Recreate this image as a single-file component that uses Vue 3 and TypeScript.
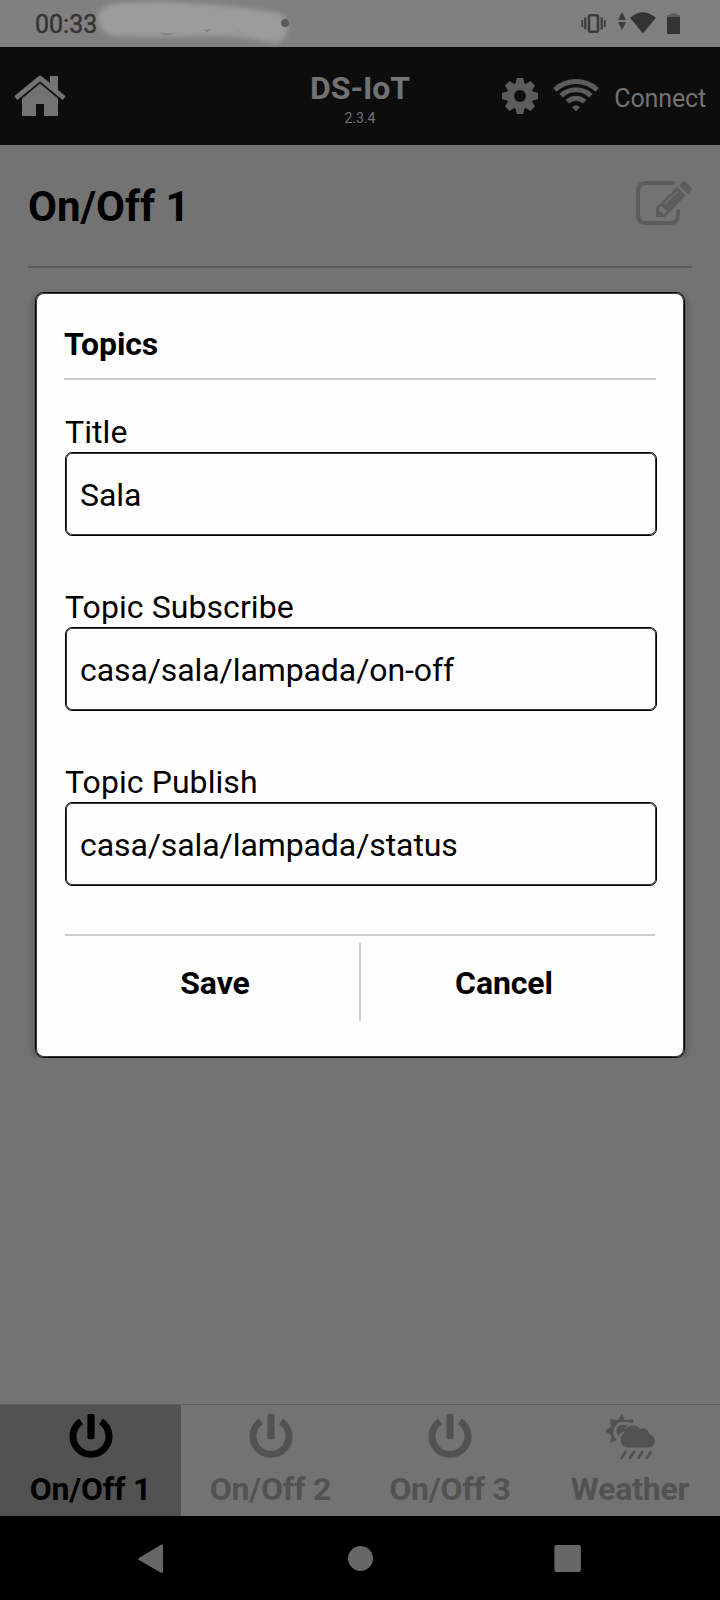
<script setup lang="ts">
import { ref } from 'vue'

interface Field { id: string; label: string; value: string }
interface Tab { label: string; icon: 'power' | 'weather' }

const fields = ref<Field[]>([
  { id: 'title', label: 'Title', value: 'Sala' },
  { id: 'subscribe', label: 'Topic Subscribe', value: 'casa/sala/lampada/on-off' },
  { id: 'publish', label: 'Topic Publish', value: 'casa/sala/lampada/status' },
])

const tabs: Tab[] = [
  { label: 'On/Off 1', icon: 'power' },
  { label: 'On/Off 2', icon: 'power' },
  { label: 'On/Off 3', icon: 'power' },
  { label: 'Weather', icon: 'weather' },
]
const active = ref(0)
</script>

<template>
  <div class="screen">
    <div class="status">
      <span class="clock">00:33</span>
      <svg class="smudge" width="210" height="56" viewBox="90 0 210 56">
        <defs>
          <filter id="soft" filterUnits="userSpaceOnUse" x="80" y="-10" width="230" height="76"><feGaussianBlur stdDeviation="2.4" /></filter>
        </defs>
        <path d="M98 17Q100 5 116 3.500Q160 0 192 3.500Q240 6 278 13Q289 17 287 30Q284 45 272 43Q240 35 212 36Q160 38 116 36Q98 33 98 17z" fill="#9c9c9c" filter="url(#soft)" />
        <path d="M159 32.500q8 5.500 17 0q-8 2-17 0zM203 29l4 3 4-3-4 1z" fill="#808080" />
        <path d="M237 31q4 3 10 2" fill="none" stroke="#919191" />
        <circle cx="285" cy="23" r="4" fill="#5a5a5a" />
      </svg>
      <svg class="status-icons" width="104" height="28" viewBox="578 9 104 28">
        <g fill="none" stroke="#3c3c3c">
          <rect x="589" y="15.300" width="9" height="16.400" rx="1.500" stroke-width="2.600" />
          <path d="M585.300 17.500v12M601.700 17.500v12" stroke-width="2.200" />
          <path d="M582.200 20v7M604.800 20v7" stroke-width="1.800" />
        </g>
        <path d="M618 20l4-8 4 8zM618 22h8l-4 8z" fill="#3c3c3c" />
        <path d="M630 17.800Q643 6.500 656 17.800L643 33.500z" fill="#333" />
        <path d="M670 13.500h7V15h3v2h-13v-2h3z" fill="#5d5d5d" />
        <path d="M667 17h13v17h-13z" fill="#333" />
      </svg>
    </div>

    <header class="header">
      <div class="header-side">
        <svg class="home" width="52" height="42" viewBox="14 75 52 42">
          <path d="M15 95.500L37.800 76.700Q40 75 42.200 76.700L50 83v-6.200q0-.8.8-.8h6.400q.8 0 .8.800V90l7 5.700q.7.700 0 1.500l-1.700 2q-.8.800-1.600.100L40 81.500 18.300 99.300q-.8.700-1.600-.1l-1.800-2q-.7-.9.100-1.700z" />
          <path d="M22 98.500L40 83.500 58 98.500V115q0 1-1 1H44V104h-8v12H23q-1 0-1-1z" />
        </svg>
      </div>
      <div class="brand">
        <h1>DS-IoT</h1>
        <small>2.3.4</small>
      </div>
      <div class="header-side actions">
        <svg width="36" height="36" viewBox="-18 -18 36 36">
          <path v-for="n in 8" :key="n" d="M-4.500-11.500L-3.500-17.500Q-3.400-18-2.800-18H2.800Q3.400-18 3.500-17.500L4.500-11.500z" :transform="`rotate(${n * 45})`" />
          <circle r="9.700" fill="none" stroke="#5c5c5c" stroke-width="7.500" />
        </svg>
        <svg width="46" height="34" viewBox="-23 -33 46 34">
          <g fill="none" stroke="#5c5c5c">
            <path d="M-21.200-21.200A31.500 31.500 0 0 1 21.200-21.200" stroke-width="5" />
            <path d="M-15-15.300A22 22 0 0 1 15-15.300" stroke-width="5" />
            <path d="M-8.700-9.300A12.500 12.500 0 0 1 8.700-9.300" stroke-width="5" />
          </g>
          <path d="M-4-3.800Q0-7.500 4-3.800L.7-.5Q0 .1-.7-.5z" />
        </svg>
        <span>Connect</span>
      </div>
    </header>

    <main class="content">
      <div class="heading">
        <h2>On/Off 1</h2>
        <svg width="56" height="44" viewBox="0 0 56 44">
          <path d="M37 2H10Q2 2 2 10V34Q2 42 10 42H34Q42 42 42 34V30" fill="none" stroke="#5c5c5c" stroke-width="4" stroke-linecap="round" />
          <path d="M20 26.500L41.300 5.800 49.700 14.500 29 36H20z" />
          <path d="M43 4.200L46.500.800Q48-.6 49.600.9L55.200 6.500Q56.700 8 55.200 9.600L52 13z" />
          <path d="M29 22.500L41.500 10.500" stroke="#737373" stroke-width="1.200" />
          <path d="M22.500 27l3-2 6 5-4 4-1-3-3.500-1z" fill="#737373" />
        </svg>
      </div>
    </main>

    <nav class="tabs">
      <button v-for="(tab, i) in tabs" :key="tab.label" :class="['tab', { active: i === active }]" @click="active = i">
        <svg v-if="tab.icon === 'power'" width="44" height="44" viewBox="0 0 44 44">
          <path d="M12 7.400A18 18 0 1 0 32 7.400" fill="none" stroke="currentColor" stroke-width="7" />
          <rect x="18.400" width="7.200" height="25.300" rx="1.800" />
        </svg>
        <svg v-else class="weather" width="50" height="46" viewBox="0 0 50 46">
          <path d="M16.700 0L20.200 6.300 28.700 5 27.500 9Q18 6.500 13 9Q6 15 9.500 22.500L11.500 26 5 29 6.300 21.500 0 17 6.300 12.700 5 5 13 6.300z" />
          <path d="M20 11Q13 10 11.300 16Q11 20 14 21.500Q16 18 19.500 17.500Q20 14 22.500 12Q21.500 11 20 11z" />
          <path d="M22 33.500A8 8 0 0 1 19.500 18.700Q21 11.200 28 11.400Q33 11.500 35 15Q42 12.500 44.500 20Q50 22 49.700 27.500Q49 33 43 33.500z" />
          <path d="M20.500 37.500l-4 6.500M29 37.500L25 44M37.500 37.500l-4 6.500M46 37.500L42 44" fill="none" stroke="currentColor" stroke-width="2.500" stroke-linecap="round" />
        </svg>
        <span>{{ tab.label }}</span>
      </button>
    </nav>

    <div class="system-nav">
      <svg width="26" height="30" viewBox="0 0 26 30"><path d="M1 14L23 .8Q25 0 25 2V27Q25 30 22.500 28.500L1 16Q-.6 15 1 14z" /></svg>
      <svg class="round" width="25" height="25" viewBox="0 0 25 25"><circle cx="12.500" cy="12.500" r="12.500" /></svg>
      <svg width="27" height="27" viewBox="0 0 27 27"><rect x=".4" width="26.500" height="27" rx="2" /></svg>
    </div>

    <section class="dialog" role="dialog">
      <h3>Topics</h3>
      <label v-for="field in fields" :key="field.id" class="field">
        <span>{{ field.label }}</span>
        <input v-model="field.value" type="text" />
      </label>
      <div class="dialog-actions">
        <button>Save</button>
        <button>Cancel</button>
      </div>
    </section>
  </div>
</template>

<style>
body { margin: 0; background: #737373; }
</style>

<style scoped>
.screen {
  position: relative;
  display: flex;
  flex-direction: column;
  width: 720px;
  height: 1600px;
  overflow: hidden;
  background: #737373;
  color: #000;
  font-family: Roboto, sans-serif;
}
svg { display: block; flex: none; }
h1, h2, h3 { margin: 0; font-weight: 700; }
button { padding: 0; border: 0; background: none; font: inherit; color: inherit; }
.status {
  position: relative;
  z-index: 1;
  box-sizing: border-box;
  display: flex;
  justify-content: space-between;
  height: 47px;
  padding: 9px 38px 0 35px;
  background: #808080;
}
.clock { font-size: 25px; line-height: 32px; -webkit-text-stroke: 0.4px #333; color: #333; }
.smudge { position: absolute; left: 90px; top: 0; }
.header {
  box-sizing: border-box;
  display: grid;
  grid-template-columns: 1fr 140px 1fr;
  height: 98px;
  padding: 0 14px;
  background: #0d0d0d;
  color: #737373;
}
.home { margin-top: 28px; fill: #737373; }
.brand { display: flex; flex-direction: column; align-items: center; }
.brand h1 { margin-top: 21px; font-size: 32px; line-height: 40px; letter-spacing: -0.1px; }
.brand small { font-size: 14px; line-height: 20px; }
.actions { display: flex; justify-content: flex-end; padding-top: 31px; fill: #5c5c5c; }
.actions svg:first-child { margin-right: 15px; }
.actions svg:nth-child(2) { margin-right: 15px; }
.actions span { font-size: 25px; line-height: 41px; letter-spacing: -0.14px; }
.content { flex: 1; padding: 0 28px; }
.heading {
  box-sizing: border-box;
  display: flex;
  justify-content: space-between;
  height: 123px;
  padding-top: 36px;
  border-bottom: 2px solid #5c5c5c;
}
.heading h2 { font-size: 42px; line-height: 52px; }
.heading svg { fill: #5c5c5c; }
.tabs {
  box-sizing: border-box;
  display: grid;
  grid-template-columns: 181px 179px 180px 180px;
  height: 112px;
  border-top: 1px solid #5f5f5f;
}
.tab {
  display: flex;
  flex-direction: column;
  align-items: center;
  justify-content: flex-start;
  padding-top: 8.5px;
  color: #525252;
  fill: currentColor;
  font-size: 32px;
  font-weight: 700;
}
.tab span { margin-top: 12.5px; line-height: 38px; letter-spacing: -0.2px; }
.tab .weather { margin-bottom: -2px; }
.tab.active { background: #525252; color: #000; }
.system-nav {
  box-sizing: border-box;
  display: flex;
  align-items: center;
  justify-content: space-between;
  height: 84px;
  padding: 1px 139px 0 138px;
  background: #000;
  fill: #676767;
}
.system-nav .round { margin-left: 2px; }
.dialog {
  position: absolute;
  left: 35px;
  top: 292px;
  box-sizing: border-box;
  width: 650px;
  height: 766px;
  padding: 25px 27px 0;
  border: 1px solid #000;
  border-radius: 9px;
  background: #fefefe;
  box-shadow: inset 0 0 0 1px #3a3a3a, 0 2px 10px rgba(0, 0, 0, 0.35);
  clip-path: inset(0 -14px);
  font-size: 32px;
}
.dialog h3 { margin: 0 1px 31px; height: 60px; border-bottom: 2px solid #ccc; font-size: 32px; line-height: 52px; letter-spacing: -0.1px; }
.field { display: block; height: 175px; margin: 0 0 0 2px; }
.field span { display: block; height: 41px; line-height: 42px; letter-spacing: 0.07px; }
.field input {
  display: block;
  box-sizing: border-box;
  width: 592px;
  height: 84px;
  padding: 2px 14px 0;
  border: 1px solid #000;
  border-radius: 7px;
  box-shadow: inset 0 0 0 1px #3a3a3a;
  outline: 0;
  background: #fefefe;
  color: #000;
  font: 32px Roboto, sans-serif;
  letter-spacing: -0.09px;
}
.dialog-actions {
  display: grid;
  grid-template-columns: 296px 294px;
  width: 590px;
  margin: -2px 0 0 2px;
  padding-top: 7px;
  border-top: 2px solid #ccc;
}
.dialog-actions button { box-sizing: border-box; height: 78px; padding-top: 2px; font-weight: 700; letter-spacing: -0.1px; }
.dialog-actions button:first-child { padding-left: 6px; border-right: 2px solid #ccc; }
.dialog-actions button:last-child { padding-right: 8px; }
</style>
